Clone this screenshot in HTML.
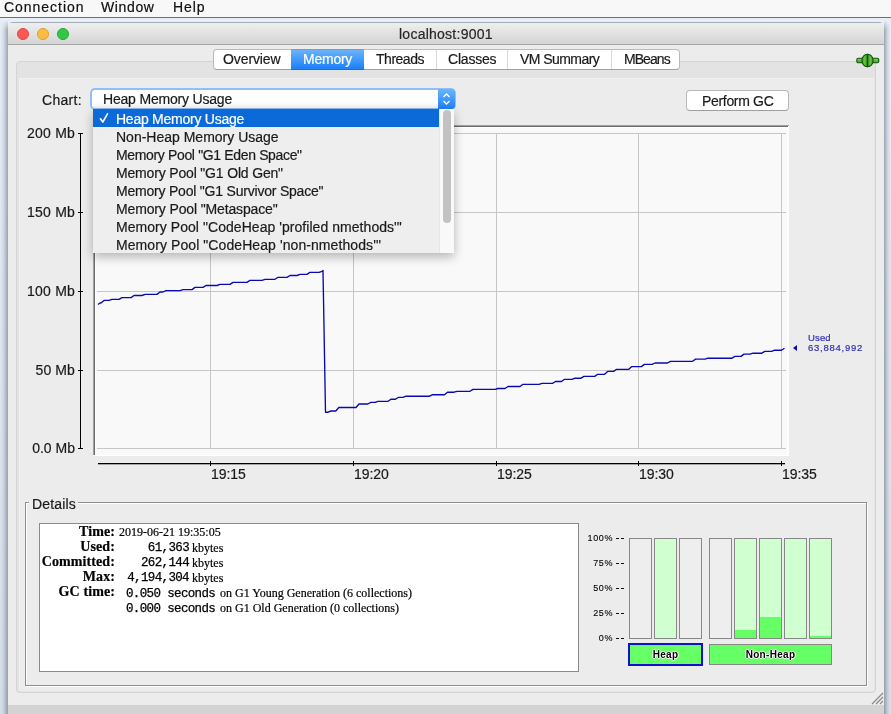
<!DOCTYPE html>
<html><head><meta charset="utf-8">
<style>
*{margin:0;padding:0;box-sizing:border-box}
html,body{width:891px;height:714px;overflow:hidden}
body{position:relative;background:#dfe7f0;font-family:"Liberation Sans",sans-serif;color:#000}
.a{position:absolute}
.t{position:absolute;white-space:pre;line-height:1;will-change:transform;-webkit-text-stroke:0.2px currentColor}
.s{font-family:"Liberation Serif",serif}
.m{font-family:"Liberation Mono",monospace}
</style></head><body>
<div class="a" style="left:0;top:18px;width:891px;height:696px;background:linear-gradient(to bottom,#e8eff8,#d9e2ec)"></div>
<div class="a" style="left:0;top:20px;width:8px;height:694px;-webkit-mask-image:linear-gradient(to bottom,transparent,#000 10px);background:linear-gradient(to right,rgba(0,0,0,0) 0%,rgba(40,55,75,0.10) 45%,rgba(40,55,75,0.40) 100%)"></div>
<div class="a" style="left:884px;top:20px;width:7px;height:694px;-webkit-mask-image:linear-gradient(to bottom,transparent,#000 10px);background:linear-gradient(to left,rgba(0,0,0,0) 0%,rgba(40,55,75,0.10) 45%,rgba(40,55,75,0.40) 100%)"></div>
<div class="a" style="left:0;top:0;width:891px;height:17px;background:#f8f8f8"></div>
<div class="a" style="left:0;top:17px;width:891px;height:1px;background:#6f6f6f"></div>
<div class="t" style="left:4px;top:0px;font-size:14px;color:#111;letter-spacing:0.97px;">Connection</div>
<div class="t" style="left:101px;top:0px;font-size:14px;color:#111;letter-spacing:0.62px;">Window</div>
<div class="t" style="left:173px;top:0px;font-size:14px;color:#111;letter-spacing:0.9px;">Help</div>
<div class="a" style="left:8px;top:22px;width:876px;height:683px;background:#ececec;border-radius:5px 5px 0 0;overflow:hidden"><div class="a" style="left:0;top:0;width:876px;height:22px;background:linear-gradient(to bottom,#efefef,#d4d4d4);border-top:1px solid #a5acb4"></div><div class="a" style="left:0;top:22px;width:876px;height:1px;background:#a6a6a6"></div></div>
<div class="a" style="left:8px;top:705px;width:876px;height:9px;background:#d3d3d3"></div>
<div class="a" style="left:17px;top:28px;width:12px;height:12px;border-radius:50%;background:#fc5753;border:1px solid #de4a45"></div>
<div class="a" style="left:37px;top:28px;width:12px;height:12px;border-radius:50%;background:#fdbc40;border:1px solid #dea034"></div>
<div class="a" style="left:57px;top:28px;width:12px;height:12px;border-radius:50%;background:#33c748;border:1px solid #27a935"></div>
<div class="t" style="left:399px;top:27px;font-size:14px;color:#262626;letter-spacing:0.25px;">localhost:9001</div>
<div class="a" style="left:16px;top:61px;width:860px;height:632px;border:1px solid #d4d4d4;border-radius:4px;background:#e3e3e3"></div>
<div class="a" style="left:19px;top:78px;width:855px;height:613px;background:#ececec;border-top:1px solid #f0f0f0;border-left:1px solid #f0f0f0"></div>
<div class="a" style="left:213px;top:49px;width:467px;height:21px;border:1px solid #bababa;border-bottom-color:#a0a0a0;border-radius:4px;background:#fff"></div>
<div class="a" style="left:291px;top:49px;width:73px;height:21px;background:linear-gradient(to bottom,#6cb2f8,#1b80fb);border-top:1px solid #58a3f6;border-bottom:1px solid #1a6ee0"></div>
<div class="a" style="left:436px;top:50px;width:1px;height:19px;background:#dadada"></div>
<div class="a" style="left:507px;top:50px;width:1px;height:19px;background:#dadada"></div>
<div class="a" style="left:611px;top:50px;width:1px;height:19px;background:#dadada"></div>
<div class="t" style="left:223px;top:52px;font-size:14px;color:#1a1a1a;letter-spacing:-0.1px;">Overview</div>
<div class="t" style="left:303px;top:52px;font-size:14px;color:#fff;letter-spacing:-0.24px;">Memory</div>
<div class="t" style="left:376px;top:52px;font-size:14px;color:#1a1a1a;letter-spacing:-0.48px;">Threads</div>
<div class="t" style="left:448px;top:52px;font-size:14px;color:#1a1a1a;letter-spacing:-0.2px;">Classes</div>
<div class="t" style="left:520px;top:52px;font-size:14px;color:#1a1a1a;letter-spacing:-0.56px;">VM Summary</div>
<div class="t" style="left:624px;top:52px;font-size:14px;color:#1a1a1a;letter-spacing:-0.94px;">MBeans</div>
<svg class="a" style="left:855px;top:53px" width="26" height="15" viewBox="0 0 26 15">
  <defs><linearGradient id="gb" x1="0" y1="0" x2="0" y2="1"><stop offset="0" stop-color="#8ad05a"/><stop offset="1" stop-color="#4a9e28"/></linearGradient>
  <linearGradient id="gc" x1="0" y1="0" x2="1" y2="0"><stop offset="0" stop-color="#3f9a22"/><stop offset="0.5" stop-color="#6cc040"/><stop offset="1" stop-color="#3f9a22"/></linearGradient></defs>
  <rect x="1.8" y="5.2" width="22" height="4.6" rx="1.6" fill="url(#gb)" stroke="#0a560a" stroke-width="1.1"/>
  <path d="M12.3 1.2 A5.4 6.3 0 0 0 12.3 13.8 Z" fill="url(#gc)" stroke="#0a560a" stroke-width="1.1"/>
  <path d="M12.7 1.2 A5.4 6.3 0 0 1 12.7 13.8 Z" fill="url(#gc)" stroke="#0a560a" stroke-width="1.1"/>
</svg>
<div class="t" style="left:42px;top:93px;font-size:14px;color:#1a1a1a;letter-spacing:0.3px;">Chart:</div>
<div class="a" style="left:90px;top:88px;width:366px;height:22px;border-radius:5px;background:#92bff5"></div>
<div class="a" style="left:92px;top:90px;width:347px;height:18px;background:linear-gradient(to bottom,#fff 70%,#f4f4f4);border-radius:3px 0 0 3px"></div>
<div class="a" style="left:438px;top:89px;width:17px;height:20px;background:linear-gradient(to bottom,#6db4fa,#1c81fb);border-radius:0 4px 4px 0"></div>
<svg class="a" style="left:438px;top:89px" width="17" height="20" viewBox="0 0 17 20"><path d="M5.5 8 L8.5 5 L11.5 8 M5.5 12 L8.5 15 L11.5 12" fill="none" stroke="#fff" stroke-width="1.3"/></svg>
<div class="t" style="left:103px;top:92px;font-size:14px;color:#1a1a1a;letter-spacing:-0.19px;">Heap Memory Usage</div>
<div class="a" style="left:686px;top:90px;width:103px;height:21px;border:1px solid #b8b8b8;border-bottom-color:#9e9e9e;border-radius:4px;background:#fff"></div>
<div class="t" style="left:702px;top:94px;font-size:14px;color:#1a1a1a;letter-spacing:-0.32px;">Perform GC</div>
<div class="a" style="left:93px;top:125px;width:696px;height:331px;background:#fff"></div>
<div class="a" style="left:96px;top:128px;width:691px;height:327px;background:#f9f9f9"></div>
<div class="a" style="left:93px;top:125px;width:696px;height:1px;background:#a0a0a0"></div>
<div class="a" style="left:94px;top:126px;width:694px;height:1px;background:#6c6c6c"></div>
<div class="a" style="left:93px;top:125px;width:1px;height:330px;background:#a0a0a0"></div>
<div class="a" style="left:94px;top:126px;width:1px;height:329px;background:#6c6c6c"></div>
<div class="a" style="left:97px;top:133px;width:689px;height:1px;background:#c6c6c6"></div>
<div class="a" style="left:97px;top:212px;width:689px;height:1px;background:#c6c6c6"></div>
<div class="a" style="left:97px;top:291px;width:689px;height:1px;background:#c6c6c6"></div>
<div class="a" style="left:97px;top:370px;width:689px;height:1px;background:#c6c6c6"></div>
<div class="a" style="left:97px;top:448px;width:689px;height:1px;background:#c6c6c6"></div>
<div class="a" style="left:210px;top:133px;width:1px;height:316px;background:#c6c6c6"></div>
<div class="a" style="left:353px;top:133px;width:1px;height:316px;background:#c6c6c6"></div>
<div class="a" style="left:496px;top:133px;width:1px;height:316px;background:#c6c6c6"></div>
<div class="a" style="left:638px;top:133px;width:1px;height:316px;background:#c6c6c6"></div>
<div class="a" style="left:781px;top:133px;width:1px;height:316px;background:#c6c6c6"></div>
<div class="a" style="left:80px;top:133px;width:1px;height:316px;background:#000"></div>
<div class="a" style="left:78px;top:133px;width:5px;height:1px;background:#000"></div>
<div class="a" style="left:78px;top:212px;width:5px;height:1px;background:#000"></div>
<div class="a" style="left:78px;top:291px;width:5px;height:1px;background:#000"></div>
<div class="a" style="left:78px;top:370px;width:5px;height:1px;background:#000"></div>
<div class="a" style="left:78px;top:448px;width:5px;height:1px;background:#000"></div>
<div class="a" style="left:98px;top:463px;width:687px;height:1px;background:#000;box-shadow:0 0.6px 0 rgba(0,0,0,0.5)"></div>
<div class="a" style="left:210px;top:461px;width:1px;height:5px;background:#000"></div>
<div class="a" style="left:353px;top:461px;width:1px;height:5px;background:#000"></div>
<div class="a" style="left:496px;top:461px;width:1px;height:5px;background:#000"></div>
<div class="a" style="left:638px;top:461px;width:1px;height:5px;background:#000"></div>
<div class="a" style="left:781px;top:461px;width:1px;height:5px;background:#000"></div>
<svg class="a" style="left:0;top:0" width="891" height="714" viewBox="0 0 891 714">
  <polyline points="98.0,304.5 100.0,303.0 101.0,303.0 104.0,300.4 109.0,300.4 112.0,299.4 119.0,299.4 122.0,297.6 131.0,297.6 134.0,295.5 142.0,295.5 145.0,294.4 157.0,294.4 160.0,292.0 163.0,292.0 166.0,290.6 180.0,290.6 183.0,289.6 192.0,289.6 195.0,287.4 203.0,287.4 206.0,285.5 217.0,285.5 220.0,284.4 230.0,284.4 233.0,282.4 247.0,282.4 250.0,280.3 262.0,280.3 265.0,279.3 275.0,279.3 278.0,277.3 287.0,277.3 290.0,275.5 297.0,275.5 300.0,274.4 307.0,274.4 310.0,272.3 319.0,272.3 322.0,271.3 323.0,270.5 325.5,412.2 328.0,412.2 331.0,411.0 335.8,411.0 338.8,407.5 356.0,407.5 359.0,404.0 367.8,404.0 370.8,402.4 375.0,402.4 378.0,401.3 388.0,401.3 391.0,399.2 395.5,399.2 398.5,397.3 403.0,397.3 406.0,396.2 429.6,396.2 432.6,394.7 444.5,394.7 447.5,392.2 454.0,392.2 457.0,391.3 470.0,391.3 473.0,389.4 495.0,389.4 498.0,388.5 505.0,388.5 508.0,386.5 520.0,386.5 523.0,384.3 539.0,384.3 542.0,383.3 552.5,383.3 555.5,381.5 561.5,381.5 564.5,379.3 572.0,379.3 575.0,378.2 581.0,378.2 584.0,376.4 594.7,376.4 597.7,374.3 604.6,374.3 607.6,371.4 613.6,371.4 616.6,369.3 628.8,369.3 631.8,366.6 641.4,366.6 644.4,364.4 652.0,364.4 655.0,363.0 667.5,363.0 670.5,361.3 692.6,361.3 695.6,359.1 705.0,359.1 708.0,358.2 732.0,358.2 735.0,356.4 741.0,356.4 744.0,354.1 750.0,354.1 753.0,353.2 761.8,353.2 764.8,351.4 771.6,351.4 774.6,350.2 781.5,350.2 784.5,348.2" fill="none" stroke="#0808b4" stroke-width="1.35" stroke-linejoin="round"/>
  <path d="M797 345V351L793 348Z" fill="#0808b4"/>
</svg>
<div class="t" style="left:0;top:126px;width:75px;text-align:right;font-size:14px;color:#1a1a1a;letter-spacing:0.2px">200 Mb</div>
<div class="t" style="left:0;top:205px;width:75px;text-align:right;font-size:14px;color:#1a1a1a;letter-spacing:0.2px">150 Mb</div>
<div class="t" style="left:0;top:284px;width:75px;text-align:right;font-size:14px;color:#1a1a1a;letter-spacing:0.2px">100 Mb</div>
<div class="t" style="left:0;top:363px;width:75px;text-align:right;font-size:14px;color:#1a1a1a;letter-spacing:0.1px">50 Mb</div>
<div class="t" style="left:0;top:441px;width:75px;text-align:right;font-size:14px;color:#1a1a1a;letter-spacing:0px">0.0 Mb</div>
<div class="t" style="left:211px;top:467px;font-size:14px;color:#1a1a1a;letter-spacing:-0.07px;">19:15</div>
<div class="t" style="left:354px;top:467px;font-size:14px;color:#1a1a1a;letter-spacing:-0.07px;">19:20</div>
<div class="t" style="left:497px;top:467px;font-size:14px;color:#1a1a1a;letter-spacing:-0.07px;">19:25</div>
<div class="t" style="left:639px;top:467px;font-size:14px;color:#1a1a1a;letter-spacing:-0.07px;">19:30</div>
<div class="t" style="left:782px;top:467px;font-size:14px;color:#1a1a1a;letter-spacing:-0.07px;">19:35</div>
<div class="t" style="left:808px;top:333px;font-size:9.5px;color:#3030b8;letter-spacing:0.15px;-webkit-text-stroke:0.2px #3030b8">Used</div>
<div class="t" style="left:808px;top:343px;font-size:9.5px;color:#3030b8;letter-spacing:0.75px;-webkit-text-stroke:0.2px #3030b8">63,884,992</div>
<div class="a" style="left:93px;top:109px;width:361px;height:144px;background:#eeeeee;box-shadow:0 4px 10px rgba(0,0,0,0.28)"></div>
<div class="a" style="left:93px;top:109px;width:346px;height:18px;background:#0b69d8"></div>
<div class="a" style="left:439px;top:109px;width:15px;height:144px;background:#f9f9f9;border-left:1px solid #e6e6e6"></div>
<div class="a" style="left:443px;top:110px;width:8px;height:113px;background:#c2c2c2;border-radius:4px"></div>
<svg class="a" style="left:93px;top:108px" width="20" height="20"><path d="M7.4 10.8L9.8 14L14.5 5.8" fill="none" stroke="#fff" stroke-width="1.6" stroke-linecap="round" stroke-linejoin="round"/></svg>
<div class="t" style="left:116px;top:112px;font-size:14px;color:#fff;letter-spacing:-0.25px;">Heap Memory Usage</div>
<div class="t" style="left:116px;top:130px;font-size:14px;color:#1a1a1a;letter-spacing:0px;">Non-Heap Memory Usage</div>
<div class="t" style="left:116px;top:148px;font-size:14px;color:#1a1a1a;letter-spacing:-0.35px;">Memory Pool "G1 Eden Space"</div>
<div class="t" style="left:116px;top:166px;font-size:14px;color:#1a1a1a;letter-spacing:-0.17px;">Memory Pool "G1 Old Gen"</div>
<div class="t" style="left:116px;top:184px;font-size:14px;color:#1a1a1a;letter-spacing:-0.21px;">Memory Pool "G1 Survivor Space"</div>
<div class="t" style="left:116px;top:202px;font-size:14px;color:#1a1a1a;letter-spacing:-0.14px;">Memory Pool "Metaspace"</div>
<div class="t" style="left:116px;top:220px;font-size:14px;color:#1a1a1a;letter-spacing:0.05px;">Memory Pool "CodeHeap 'profiled nmethods'"</div>
<div class="t" style="left:116px;top:238px;font-size:14px;color:#1a1a1a;letter-spacing:0.08px;">Memory Pool "CodeHeap 'non-nmethods'"</div>
<div class="a" style="left:25px;top:502px;width:842px;height:184px;border:1px solid #8e8e8e;border-right-color:#8e8e8e;box-shadow:1px 1px 0 #fff, inset 1px 1px 0 #fff"></div>
<div class="a" style="left:29px;top:496px;width:49px;height:12px;background:#ececec"></div>
<div class="t" style="left:32px;top:497px;font-size:14px;color:#1a1a1a;letter-spacing:0.17px;">Details</div>
<div class="a" style="left:39px;top:523px;width:540px;height:149px;background:#fff;border:1px solid #8a8a8a"></div>
<div class="t s" style="left:0;top:525px;width:115px;text-align:right;font-size:14px;font-weight:bold;letter-spacing:0.1px">Time:</div>
<div class="t s" style="left:0;top:540px;width:115px;text-align:right;font-size:14px;font-weight:bold;letter-spacing:0.1px">Used:</div>
<div class="t s" style="left:0;top:555px;width:115px;text-align:right;font-size:14px;font-weight:bold;letter-spacing:0.1px">Committed:</div>
<div class="t s" style="left:0;top:570px;width:115px;text-align:right;font-size:14px;font-weight:bold;letter-spacing:0.1px">Max:</div>
<div class="t s" style="left:0;top:585px;width:115px;text-align:right;font-size:14px;font-weight:bold;letter-spacing:0.1px">GC time:</div>
<div class="t" style="left:119px;top:526px;font-size:12px;color:#000;letter-spacing:0px;font-family:'Liberation Serif',serif">2019-06-21 19:35:05</div>
<div class="t m" style="left:100px;top:542px;width:89px;text-align:right;font-size:12.5px;letter-spacing:-0.64px;-webkit-text-stroke:0.25px #000">61,363</div>
<div class="t" style="left:192px;top:542px;font-size:12px;color:#000;letter-spacing:0px;font-family:'Liberation Serif',serif">kbytes</div>
<div class="t m" style="left:100px;top:557px;width:89px;text-align:right;font-size:12.5px;letter-spacing:-0.64px;-webkit-text-stroke:0.25px #000">262,144</div>
<div class="t" style="left:192px;top:557px;font-size:12px;color:#000;letter-spacing:0px;font-family:'Liberation Serif',serif">kbytes</div>
<div class="t m" style="left:100px;top:572px;width:89px;text-align:right;font-size:12.5px;letter-spacing:-0.64px;-webkit-text-stroke:0.25px #000">4,194,304</div>
<div class="t" style="left:192px;top:572px;font-size:12px;color:#000;letter-spacing:0px;font-family:'Liberation Serif',serif">kbytes</div>
<div class="t m" style="left:126px;top:588px;font-size:12.5px;letter-spacing:-0.64px;-webkit-text-stroke:0.25px #000">0.050 seconds</div>
<div class="t" style="left:220px;top:587px;font-size:12px;color:#000;letter-spacing:0px;font-family:'Liberation Serif',serif">on G1 Young Generation (6 collections)</div>
<div class="t m" style="left:126px;top:603px;font-size:12.5px;letter-spacing:-0.64px;-webkit-text-stroke:0.25px #000">0.000 seconds</div>
<div class="t" style="left:220px;top:602px;font-size:12px;color:#000;letter-spacing:0px;font-family:'Liberation Serif',serif">on G1 Old Generation (0 collections)</div>
<div class="t" style="left:560px;top:534px;width:53px;text-align:right;font-size:9px;letter-spacing:0.6px;-webkit-text-stroke:0.1px #000">100%</div>
<div class="a" style="left:616px;top:538px;width:3px;height:1px;background:#111"></div>
<div class="a" style="left:621px;top:538px;width:3px;height:1px;background:#111"></div>
<div class="t" style="left:560px;top:559px;width:53px;text-align:right;font-size:9px;letter-spacing:0.6px;-webkit-text-stroke:0.1px #000">75%</div>
<div class="a" style="left:616px;top:563px;width:3px;height:1px;background:#111"></div>
<div class="a" style="left:621px;top:563px;width:3px;height:1px;background:#111"></div>
<div class="t" style="left:560px;top:584px;width:53px;text-align:right;font-size:9px;letter-spacing:0.6px;-webkit-text-stroke:0.1px #000">50%</div>
<div class="a" style="left:616px;top:588px;width:3px;height:1px;background:#111"></div>
<div class="a" style="left:621px;top:588px;width:3px;height:1px;background:#111"></div>
<div class="t" style="left:560px;top:609px;width:53px;text-align:right;font-size:9px;letter-spacing:0.6px;-webkit-text-stroke:0.1px #000">25%</div>
<div class="a" style="left:616px;top:613px;width:3px;height:1px;background:#111"></div>
<div class="a" style="left:621px;top:613px;width:3px;height:1px;background:#111"></div>
<div class="t" style="left:560px;top:634px;width:53px;text-align:right;font-size:9px;letter-spacing:0.6px;-webkit-text-stroke:0.1px #000">0%</div>
<div class="a" style="left:616px;top:638px;width:3px;height:1px;background:#111"></div>
<div class="a" style="left:621px;top:638px;width:3px;height:1px;background:#111"></div>
<div class="a" style="left:629px;top:538px;width:23px;height:101px;border:1px solid #888;background:#eeeeee"></div>
<div class="a" style="left:654px;top:538px;width:23px;height:101px;border:1px solid #888;background:#d0ffd0"></div>
<div class="a" style="left:679px;top:538px;width:23px;height:101px;border:1px solid #888;background:#eeeeee"></div>
<div class="a" style="left:709px;top:538px;width:23px;height:101px;border:1px solid #888;background:#eeeeee"></div>
<div class="a" style="left:734px;top:538px;width:23px;height:101px;border:1px solid #888;background:#d0ffd0"><div class="a" style="left:0;bottom:0;width:21px;height:8px;background:#66ff66"></div></div>
<div class="a" style="left:759px;top:538px;width:23px;height:101px;border:1px solid #888;background:#d0ffd0"><div class="a" style="left:0;bottom:0;width:21px;height:21px;background:#66ff66"></div></div>
<div class="a" style="left:784px;top:538px;width:23px;height:101px;border:1px solid #888;background:#d0ffd0"></div>
<div class="a" style="left:809px;top:538px;width:23px;height:101px;border:1px solid #888;background:#d0ffd0"><div class="a" style="left:0;bottom:0;width:21px;height:2px;background:#66ff66"></div></div>
<div class="a" style="left:628px;top:643px;width:75px;height:23px;border:2px solid #1010d0;background:#66ff66"></div>
<div class="t" style="left:628px;top:650px;width:75px;text-align:center;font-size:10px;font-weight:bold;letter-spacing:0.3px;color:#000;-webkit-text-stroke:0px #000;text-shadow:1px 0 0 #fff,-1px 0 0 #fff,0 1px 0 #fff,0 -1px 0 #fff">Heap</div>
<div class="a" style="left:709px;top:644px;width:123px;height:21px;border:1px solid #888;background:#66ff66"></div>
<div class="t" style="left:709px;top:650px;width:123px;text-align:center;font-size:10px;font-weight:bold;letter-spacing:0.3px;color:#000;-webkit-text-stroke:0px #000;text-shadow:1px 0 0 #fff,-1px 0 0 #fff,0 1px 0 #fff,0 -1px 0 #fff">Non-Heap</div>
<svg class="a" style="left:870px;top:691px" width="14" height="14"><path d="M2 13L13 2 M6 13L13 6 M10 13L13 10" stroke="#8a8a8a" stroke-width="1.2"/></svg>
</body></html>
